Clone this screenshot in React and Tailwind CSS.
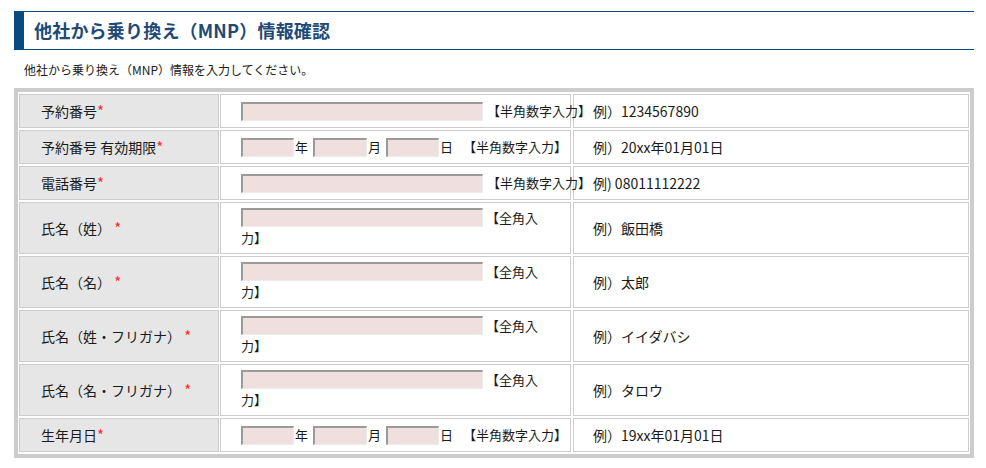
const font = { fontFamily: '"Noto Sans CJK JP", "Noto Sans", sans-serif' };

function Req({ spaced }) {
  return (
    <span className="text-[#ff2a2a] text-[15px]">
      {spaced ? ' *' : '*'}
    </span>
  );
}

function Box({ w }) {
  return (
    <input
      type="text"
      readOnly
      className={`${w} shrink-0 h-[19px] align-top bg-[#efdfdf] border-t-2 border-l-2 border-b border-r border-t-[#9a9a9a] border-l-[#9a9a9a] border-b-[#ececec] border-r-[#ececec] outline-none`}
    />
  );
}

function LabelCell({ children }) {
  return (
    <div className="w-[200px] shrink-0 flex items-center pl-[21px] bg-[#e6e6e6] border border-[#cccccc] text-[14px] text-[#1a1a1a]">
      <span>{children}</span>
    </div>
  );
}

function ExampleCell({ children }) {
  return (
    <div className="ml-[2px] flex-1 flex items-center pl-[19px] bg-white border border-[#cccccc] text-[14px] text-[#1a1a1a]">
      {children}
    </div>
  );
}

function NumberRow({ label, example }) {
  return (
    <div className="flex h-[34px]">
      <LabelCell>
        {label}
        <Req />
      </LabelCell>
      <div className="ml-[1px] w-[351px] shrink-0 flex items-center pl-[20px] bg-white border border-[#cccccc] text-[13px] text-[#1a1a1a] whitespace-nowrap">
        <Box w="w-[242px]" />
        {/* the note runs past the cell edge, drawn over the next cell */}
        <span className="relative ml-[4px] shrink-0">【半角数字入力】</span>
      </div>
      <ExampleCell>{example}</ExampleCell>
    </div>
  );
}

function DateRow({ label, example }) {
  return (
    <div className="flex h-[34px]">
      <LabelCell>
        {label}
        <Req />
      </LabelCell>
      <div className="ml-[1px] w-[351px] shrink-0 flex items-center pl-[20px] bg-white border border-[#cccccc] text-[13px] text-[#1a1a1a] whitespace-nowrap">
        <Box w="w-[53px]" />
        <span className="ml-[1px]">年</span>
        <span className="ml-[5px] flex"><Box w="w-[54px]" /></span>
        <span className="ml-[1px]">月</span>
        <span className="ml-[5px] flex"><Box w="w-[53px]" /></span>
        <span className="ml-[1px]">日</span>
        <span className="ml-[10px]">【半角数字入力】</span>
      </div>
      <ExampleCell>{example}</ExampleCell>
    </div>
  );
}

function NameRow({ label, example }) {
  return (
    <div className="flex h-[52px]">
      <LabelCell>
        {label}
        <Req spaced />
      </LabelCell>
      <div className="ml-[1px] w-[351px] shrink-0 pl-[20px] pr-[24px] pt-[5px] bg-white border border-[#cccccc] text-[13px] leading-[20px] text-[#1a1a1a]">
        <Box w="w-[242px]" /> 【全角入力】
      </div>
      <ExampleCell>{example}</ExampleCell>
    </div>
  );
}

export default function App() {
  return (
    <div className="w-[986px] h-[468px] bg-white overflow-hidden" style={font}>
      <div className="ml-[14px] mt-[11px] w-[960px] h-[39px] flex items-center pl-[10px] border-t border-b border-l-[10px] border-[#0b4a7f]">
        <h1 className="text-[18px] font-bold text-[#1d4a76] tracking-[0.2px]">
          他社から乗り換え（MNP）情報確認
        </h1>
      </div>

      <p className="ml-[24px] mt-[11px] h-[18px] leading-[18px] text-[12px] text-[#1a1a1a]">
        他社から乗り換え（MNP）情報を入力してください。
      </p>

      <div className="ml-[14px] mt-[9px] w-[960px] border-4 border-[#cccccc] bg-white px-[1px] py-[2px] flex flex-col gap-[2px]">
        <NumberRow label="予約番号" example="例）1234567890" />
        <DateRow label="予約番号 有効期限" example="例）20xx年01月01日" />
        <NumberRow label="電話番号" example="例) 08011112222" />
        <NameRow label="氏名（姓）" example="例）飯田橋" />
        <NameRow label="氏名（名）" example="例）太郎" />
        <NameRow label="氏名（姓・フリガナ）" example="例）イイダバシ" />
        <NameRow label="氏名（名・フリガナ）" example="例）タロウ" />
        <DateRow label="生年月日" example="例）19xx年01月01日" />
      </div>
    </div>
  );
}
